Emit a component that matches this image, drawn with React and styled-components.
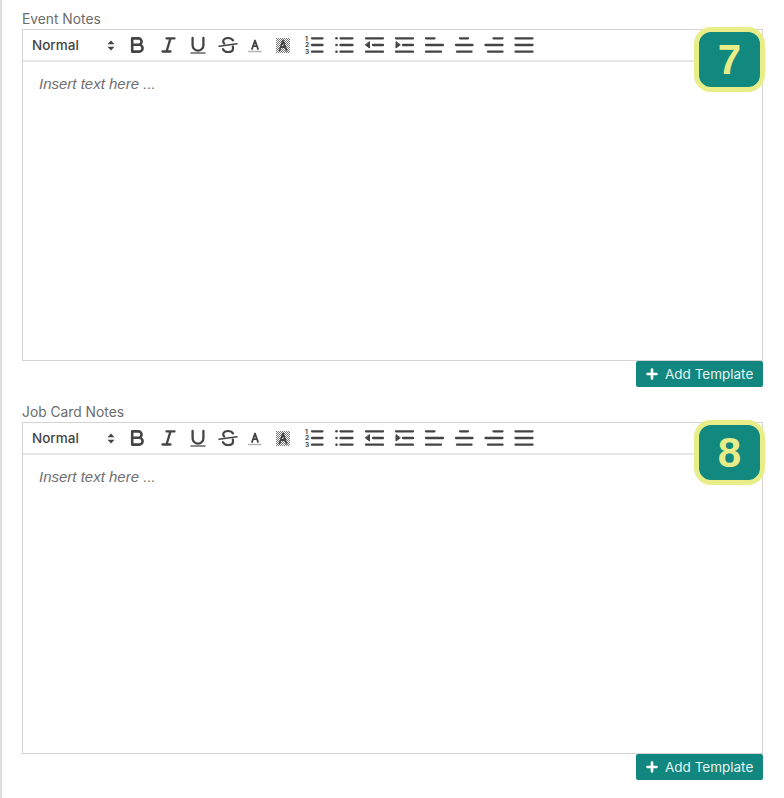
import React from 'react';
import styled, { createGlobalStyle } from 'styled-components';

const GlobalStyle = createGlobalStyle`
  html, body {
    margin: 0;
    padding: 0;
    background: #fff;
    height: 100%;
  }
`;

const Page = styled.div`
  box-sizing: border-box;
  width: 784px;
  height: 798px;
  overflow: hidden;
  border-left: 2px solid #dedede;
  padding: 12px 21px 0 20px;
  font-family: Inter, "Liberation Sans", sans-serif;
`;

const Section = styled.section`
  height: 393px;
  display: flex;
  flex-direction: column;
`;

const Label = styled.label`
  height: 17px;
  font-size: 13.8px;
  line-height: 14px;
  color: #6b6b6b;
`;

const Editor = styled.div`
  position: relative;
  box-sizing: border-box;
  height: 332px;
  border: 1px solid #d4d4d4;
  display: flex;
  flex-direction: column;
`;

const Toolbar = styled.div`
  box-sizing: border-box;
  height: 32px;
  flex: none;
  border-bottom: 2px solid #e6e6e6;
  display: flex;
  align-items: center;
`;

const Picker = styled.div`
  width: 100px;
  flex: none;
  box-sizing: border-box;
  padding: 0 8px 0 9px;
  display: flex;
  align-items: center;
  justify-content: space-between;
  font-size: 13.5px;
  font-weight: 500;
  color: #444;
`;

const ToolButton = styled.span`
  width: ${(p) => (p.$narrow ? 28 : 30)}px;
  height: 30px;
  flex: none;
  display: flex;
  align-items: center;
  justify-content: center;
`;

const Body = styled.div`
  flex: 1;
  padding: 13px 16px;
  font-family: "Liberation Sans", Arial, sans-serif;
  font-size: 15px;
  line-height: 18px;
  font-style: italic;
  color: #6f6f6f;
`;

const Badge = styled.div`
  position: absolute;
  top: -3px;
  right: -3px;
  box-sizing: border-box;
  width: 71px;
  height: 65px;
  border: 5px solid #e9ed88;
  border-radius: 17px;
  background: #12897f;
  color: #e9ed88;
  display: flex;
  align-items: center;
  justify-content: center;
  font-family: "Liberation Sans", Arial, sans-serif;
  font-size: 42px;
  font-weight: 700;
`;

const Footer = styled.div`
  display: flex;
  justify-content: flex-end;
`;

const AddButton = styled.button`
  box-sizing: border-box;
  width: 127px;
  height: 26px;
  padding: 0 0 0 10px;
  border: 0;
  border-radius: 2px;
  background: #12877f;
  color: #e4f3f1;
  display: flex;
  align-items: center;
  gap: 7px;
  font-family: Inter, "Liberation Sans", sans-serif;
  font-size: 13.5px;
`;

const Icon = ({ children, stroke = 2.3 }) => (
  <svg
    width="20"
    height="20"
    viewBox="0 0 20 20"
    fill="none"
    stroke="#444"
    strokeWidth={stroke}
    strokeLinecap="round"
    strokeLinejoin="round"
  >
    {children}
  </svg>
);

const Lines = ({ rows }) => rows.map(([x1, x2], i) => (
  <line key={i} x1={x1} x2={x2} y1={3.3 + i * 6.7} y2={3.3 + i * 6.7} />
));

const Hatch = () => (
  <>
    <defs>
      <pattern id="hatch" width="2" height="2" patternUnits="userSpaceOnUse" stroke="none">
        <rect width="1" height="1" fill="#777" />
        <rect x="1" y="1" width="1" height="1" fill="#777" />
      </pattern>
    </defs>
    <rect x="1" y="3" width="14" height="15" fill="url(#hatch)" stroke="none" />
  </>
);

const tools = [
  { key: 'bold', stroke: 2.6, draw: <path d="M4.200 3.400h6.200a3.200 3.200 0 0 1 0 6.400H4.200zM4.200 9.800h7a3.400 3.400 0 0 1 0 6.800h-7z" /> },
  { key: 'italic', stroke: 2.3, draw: <path d="M8.500 3.400h8M12.500 3.400 8.500 16.500M4.500 16.500h8" /> },
  { key: 'underline', stroke: 2.3, draw: <><path d="M4.600 3v7.200a5.400 5.400 0 0 0 10.800 0V3" /><path d="M3 18h14" strokeWidth="1.500" stroke="#666" /></> },
  { key: 'strike', stroke: 2.2, draw: <><path d="M15 5.400C14 3.600 12.200 3 10 3 7.400 3 5.200 4.200 5.200 6.200c0 1 .4 1.700 1 2.300M14.800 11.500c.2.500.2 1.200.2 1.900 0 2.400-2.400 3.600-5 3.600-2 0-4-.8-5-2.800" /><path d="M1 11.200 19 8.800" strokeWidth="1.500" /></> },
  { key: 'color', narrow: true, stroke: 1.800, draw: <><path d="M5 14 8 5.500 11 14M6 11.200h4" /><path d="M1.500 16.500h12.500" stroke="#b5b5b5" strokeWidth="1.500" /></> },
  { key: 'background', narrow: true, stroke: 1.800, draw: <><Hatch /><path d="M4.500 15.500 8 5.500l3.500 10M5.800 12h4.400" /></> },
  {
    key: 'ordered',
    draw: (
      <>
        <Lines rows={[[8, 18.500], [8, 18.500], [8, 18.500]]} />
        <g fill="#444" stroke="none" fontFamily="Inter, Liberation Sans, sans-serif" fontSize="6.500" fontWeight="700">
          <text x="1" y="5.500">1</text>
          <text x="1" y="12.200">2</text>
          <text x="1" y="18.900">3</text>
        </g>
      </>
    ),
  },
  {
    key: 'bullet',
    draw: (
      <>
        <Lines rows={[[6.500, 18.500], [6.500, 18.500], [6.500, 18.500]]} />
        <g fill="#444" stroke="none">
          <circle cx="2.500" cy="3.300" r="1.300" />
          <circle cx="2.500" cy="10" r="1.300" />
          <circle cx="2.500" cy="16.700" r="1.300" />
        </g>
      </>
    ),
  },
  {
    key: 'outdent',
    draw: (
      <>
        <path d="M2 3.300h17M9 10h10M2 16.700h17" />
        <path d="M5.500 7v6L1.500 10z" fill="#444" stroke="#444" strokeWidth="1" />
      </>
    ),
  },
  {
    key: 'indent',
    draw: (
      <>
        <path d="M2 3.300h17M9 10h10M2 16.700h17" />
        <path d="M2 7v6l4-3z" fill="#444" stroke="#444" strokeWidth="1" />
      </>
    ),
  },
  { key: 'left', draw: <Lines rows={[[2, 10.500], [2, 19], [2, 17]]} /> },
  { key: 'center', draw: <Lines rows={[[6, 14], [2, 18.500], [3, 17.500]]} /> },
  { key: 'right', draw: <Lines rows={[[9.500, 18.500], [1.500, 18.500], [4, 18.500]]} /> },
  { key: 'justify', draw: <Lines rows={[[1.500, 18.500], [1.500, 18.500], [1.500, 18.500]]} /> },
];

const NotesEditor = ({ label, number }) => (
  <Section>
    <Label>{label}</Label>
    <Editor>
      <Toolbar>
        <Picker>
          Normal
          <svg width="8" height="11" viewBox="0 0 8 11" fill="#444">
            <path d="M4 .5 7.500 4.300H.5zM4 10.500.5 6.700h7z" />
          </svg>
        </Picker>
        {tools.map((tool) => (
          <ToolButton key={tool.key} $narrow={tool.narrow}>
            <Icon stroke={tool.stroke}>{tool.draw}</Icon>
          </ToolButton>
        ))}
      </Toolbar>
      <Body>Insert text here ...</Body>
      <Badge>{number}</Badge>
    </Editor>
    <Footer>
      <AddButton type="button">
        <svg width="12" height="12" viewBox="0 0 12 12" stroke="#fff" strokeWidth="2.600" strokeLinecap="round">
          <path d="M6 1.500v9M1.500 6h9" />
        </svg>
        Add Template
      </AddButton>
    </Footer>
  </Section>
);

export default function App() {
  return (
    <>
      <GlobalStyle />
      <Page>
        <NotesEditor label="Event Notes" number="7" />
        <NotesEditor label="Job Card Notes" number="8" />
      </Page>
    </>
  );
}
